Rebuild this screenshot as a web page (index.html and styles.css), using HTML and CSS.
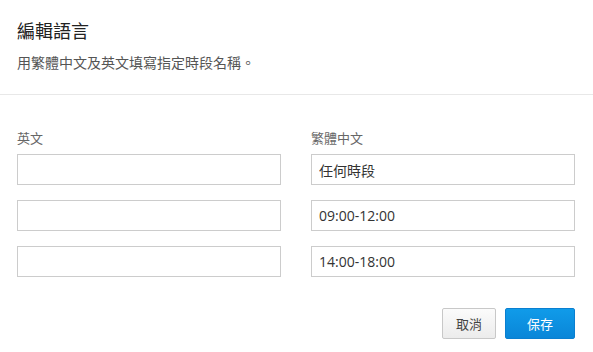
FILE: index.html
```html
<!DOCTYPE html>
<html lang="zh-Hant">
<head>
<meta charset="utf-8">
<link rel="stylesheet" href="styles.css">
</head>
<body>
<div class="dialog">
  <div class="header">
    <h1 class="title">編輯語言</h1>
    <p class="desc">用繁體中文及英文填寫指定時段名稱。</p>
  </div>
  <div class="body">
    <div class="col">
      <div class="label">英文</div>
      <input class="field" type="text" value="">
      <input class="field" type="text" value="">
      <input class="field" type="text" value="">
    </div>
    <div class="col">
      <div class="label">繁體中文</div>
      <input class="field" type="text" value="任何時段">
      <input class="field" type="text" value="09:00-12:00">
      <input class="field" type="text" value="14:00-18:00">
    </div>
  </div>
  <div class="footer">
    <button class="btn btn-default">取消</button>
    <button class="btn btn-primary">保存</button>
  </div>
</div>
</body>
</html>
```
FILE: styles.css
```css
html, body {
  margin: 0;
  padding: 0;
  background: #fff;
}
body {
  font-family: "Open Sans", "Noto Sans CJK TC", sans-serif;
  color: #333;
  width: 593px;
  height: 352px;
  overflow: hidden;
}
.dialog {
  display: flex;
  flex-direction: column;
}
.header {
  padding: 18px 17px 0 17px;
  height: 76px;
  border-bottom: 1px solid #e8e8e8;
}
.title {
  margin: 0;
  font-size: 18px;
  font-weight: normal;
  line-height: 26px;
  color: #222;
}
.desc {
  margin: 9px 0 0 0;
  font-size: 14px;
  line-height: 20px;
  color: #555;
}
.body {
  display: grid;
  grid-template-columns: 264px 264px;
  column-gap: 30px;
  padding: 33px 17px 0 17px;
}
.col {
  display: flex;
  flex-direction: column;
  gap: 15px;
}
.label {
  font-size: 13px;
  line-height: 20px;
  color: #666;
  margin-bottom: -9px;
}
.field {
  box-sizing: border-box;
  width: 264px;
  height: 31px;
  margin: 0;
  border: 1px solid #ccc;
  border-radius: 0;
  padding: 0 7px;
  font-family: "Open Sans", "Noto Sans CJK TC", sans-serif;
  font-size: 14px;
  color: #333;
  background: #fff;
  outline: none;
}
.footer {
  display: flex;
  justify-content: flex-end;
  gap: 9px;
  padding: 31px 18px 0 0;
}
.btn {
  box-sizing: border-box;
  height: 31px;
  border-radius: 2px;
  font-family: "Open Sans", "Noto Sans CJK TC", sans-serif;
  font-size: 13px;
  padding: 0;
  cursor: pointer;
}
.btn-default {
  width: 54px;
  border: 1px solid #c8c8c8;
  background: linear-gradient(#fbfbfb, #ececec);
  color: #444;
}
.btn-primary {
  width: 70px;
  border: 1px solid #0a7fd0;
  background: linear-gradient(#109be9, #0a86d8);
  color: #fff;
}
```
